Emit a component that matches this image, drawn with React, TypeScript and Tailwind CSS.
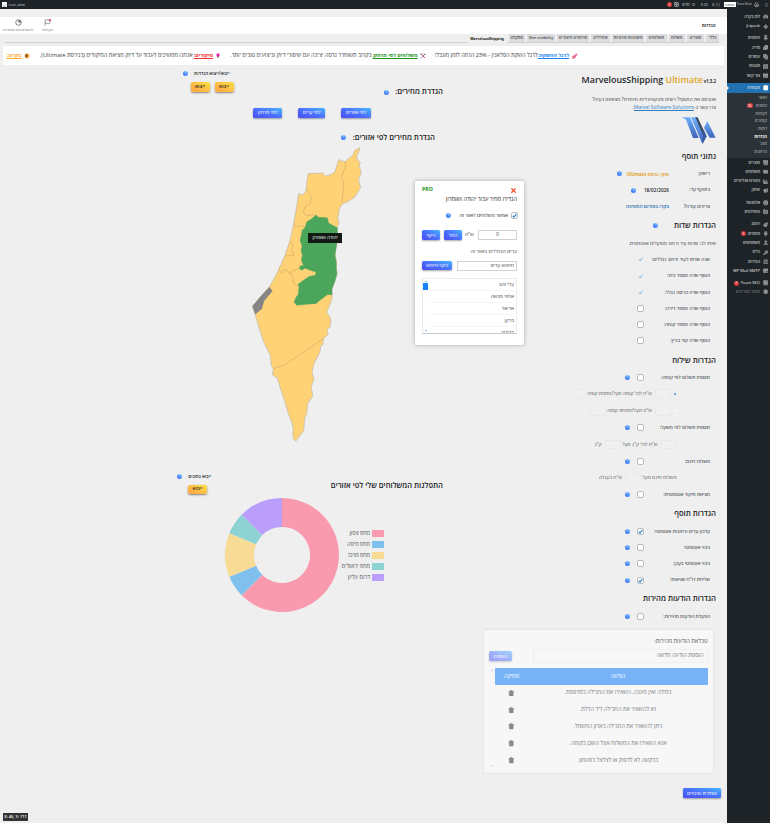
import React from "react";
import {
  Trash2, Settings, Pin, Images, Copy, MessageSquare, Mail, ShoppingBag, Archive, Banknote, BarChart3,
  Megaphone, CircleDot, Folder, Paintbrush, Plug, User, Wrench, SlidersHorizontal, MailCheck, SquareActivity,
  Gauge, Zap, Home, Flag, History, X,
} from "lucide-react";

function Help({ className = "" }: { className?: string }) {
  return (
    <span className={`flex h-[5px] w-[5px] shrink-0 items-center justify-center rounded-full bg-linear-to-bl from-[#72c2ff] to-[#3b5cf5] text-[3px] font-semibold leading-none text-[#dbe8ff] ${className}`}>
      ?
    </span>
  );
}

function Check({ on = false, ghost = false }: { on?: boolean; ghost?: boolean }) {
  return (
    <span className={`flex h-[7px] w-[7px] shrink-0 items-center justify-center rounded-[2px] ${ghost ? "" : "border border-[#b9bbbe] bg-white"}`}>
      {(on || ghost) && (
        <svg viewBox="0 0 10 10" className="h-[5px] w-[5px] shrink-0">
          <path d="M1.5 5.5 4 8 8.8 1.6" fill="none" stroke={ghost ? "#74aedb" : "#2f86c6"} strokeWidth={ghost ? 1.8 : 2.4} />
        </svg>
      )}
    </span>
  );
}

function Btn({ children, className = "text-[5px]" }: { children: React.ReactNode; className?: string }) {
  return (
    <span className={`flex shrink-0 items-center justify-center whitespace-nowrap rounded-[1.5px] bg-linear-to-bl from-[#45b5ff] via-[#4b70ff] to-[#4a4df0] font-medium leading-none text-white shadow-[0_1px_2px_rgba(0,0,0,0.35)] ${className}`}>
      {children}
    </span>
  );
}

function GoldBtn({ children }: { children: React.ReactNode }) {
  return (
    <span className="flex h-[9.5px] w-[19px] shrink-0 items-center justify-center whitespace-nowrap rounded-[2px] bg-linear-to-bl from-[#f8e043] to-[#ff9f45] pb-[1px] text-[5px] font-semibold leading-none text-[#3a3020] shadow-[0_1px_2px_rgba(0,0,0,0.45)]">
      {children}
    </span>
  );
}

function H({ children, className = "" }: { children: React.ReactNode; className?: string }) {
  return <h2 className={`flex shrink-0 items-center whitespace-nowrap text-[7.6px] font-semibold leading-none text-[#1d2327] ${className}`}>{children}</h2>;
}

function Row({ label, on, ghost, help, height = "h-[16.2px]" }: { label: string; on?: boolean; ghost?: boolean; help?: boolean; height?: string }) {
  return (
    <div className={`flex shrink-0 items-center pr-[6px] ${height}`}>
      <span className="w-[66.5px] whitespace-nowrap text-[4.95px] font-medium text-[#23282d]">{label}</span>
      <Check on={on} ghost={ghost} />
      {help && <Help className="mr-[7px]" />}
    </div>
  );
}

function Field({ className = "w-[16px]" }: { className?: string }) {
  return <span className={`h-[9.5px] shrink-0 rounded-[1px] border border-[#e9e9ea] bg-[#f0f0f0] ${className}`} />;
}

const sub = "flex shrink-0 items-center whitespace-nowrap text-[5px] text-[#55595d]";

type Item = { t: string; I: React.ComponentType<{ className?: string; strokeWidth?: number }>; h: string; badge?: string; dim?: boolean };
const menuTop: Item[] = [
  { t: "לוח בקרה", I: Gauge, h: "h-[9.3px]" },
  { t: "Jetpack", I: Zap, h: "h-[9.3px] mb-[2.4px]" },
  { t: "פוסטים", I: Pin, h: "h-[9.4px]" },
  { t: "מדיה", I: Images, h: "h-[9.4px]" },
  { t: "עמודים", I: Copy, h: "h-[9.4px]" },
  { t: "תגובות", I: MessageSquare, h: "h-[9.4px]" },
  { t: "צור קשר", I: Mail, h: "h-[9.4px]" },
];
const menuSub = ["ראשי", "הזמנות", "לקוחות", "קופונים", "דוחות", "הגדרות", "מצב", "הרחבות"];
const menuBottom: Item[] = [
  { t: "מוצרים", I: Archive, h: "h-[9.2px]" },
  { t: "תשלומים", I: Banknote, h: "h-[9.2px]" },
  { t: "נתונים אנליטיים", I: BarChart3, h: "h-[9.2px]" },
  { t: "שיווק", I: Megaphone, h: "h-[9.2px] mb-[3.2px]" },
  { t: "אלמנטור", I: CircleDot, h: "h-[9.2px]" },
  { t: "טמפלטים", I: Folder, h: "h-[9.2px] mb-[3.2px]" },
  { t: "עיצוב", I: Paintbrush, h: "h-[9.3px]" },
  { t: "תוספים", I: Plug, h: "h-[9.3px]", badge: "5" },
  { t: "משתמשים", I: User, h: "h-[9.3px]" },
  { t: "כלים", I: Wrench, h: "h-[9.3px]" },
  { t: "הגדרות", I: SlidersHorizontal, h: "h-[9.3px]" },
  { t: "WP Mail SMTP", I: MailCheck, h: "h-[9.3px] mb-[2.8px]" },
  { t: "Yoast SEO", I: SquareActivity, h: "h-[9.2px]", badge: "3" },
  { t: "מזעור תפריטים", I: Settings, h: "h-[9.2px]", dim: true },
];

function MenuItem({ t, I, h, badge, dim }: Item) {
  return (
    <div className={`flex shrink-0 items-center gap-[2.5px] whitespace-nowrap pr-[2px] text-[4.1px] font-medium leading-none ${dim ? "text-[#8a9096]" : "text-[#eeeff0]"} ${h}`}>
      <I className="h-[5.5px] w-[5.5px] shrink-0 fill-[#a7aaad]/60 text-[#a7aaad]" strokeWidth={3} />
      <span className="flex items-center gap-[2px]">
        {t}
        {badge && <i className="flex h-[5px] w-[5px] items-center justify-center rounded-full bg-[#d63638] text-[3.5px] not-italic text-white">{badge}</i>}
      </span>
    </div>
  );
}

function Sidebar() {
  return (
    <nav className="flex w-[43.5px] shrink-0 flex-col bg-[#1d2327] pt-[3.5px]">
      {menuTop.map((m) => <MenuItem key={m.t} {...m} />)}
      <div className="mt-[2.4px] flex h-[10px] shrink-0 items-center gap-[2.5px] bg-[#2271b1] pr-[2px] text-[4.1px] leading-none text-white">
        <ShoppingBag className="h-[5.5px] w-[5.5px] fill-white" strokeWidth={3} />
        ווקומרס
        <span className="mr-auto h-0 w-0 border-y-[2px] border-l-[2.5px] border-y-transparent border-l-[#f0f0f1]" />
      </div>
      <div className="flex h-[65.5px] shrink-0 flex-col bg-[#2c3338] pr-[3px] pt-[1.5px]">
        {menuSub.map((t) => (
          <div key={t} className={`flex h-[7.7px] shrink-0 items-center gap-[3px] text-[4px] leading-none ${t === "הגדרות" ? "font-bold text-white" : "text-[#c3c6c9]"}`}>
            {t}
            {t === "הזמנות" && <i className="flex h-[5px] w-[6px] items-center justify-center rounded-full bg-[#d63638] text-[3.4px] not-italic text-white">36</i>}
          </div>
        ))}
      </div>
      {menuBottom.map((m) => <MenuItem key={m.t} {...m} />)}
    </nav>
  );
}

function TopBar() {
  return (
    <header className="flex h-[9px] shrink-0 items-center whitespace-nowrap bg-[#1d2327] pr-[2px] text-[4px] leading-none text-[#d8dadc]">
      <span className="h-[4px] w-[3.5px] rounded-[1px] border border-[#50565b]" />
      <Home className="mr-[6px] h-[5px] w-[5px] text-[#b5b8bb]" strokeWidth={3} />
      <span className="mr-[2px] w-[15px] text-[3.1px]">Yossi Host</span>
      <span className="mr-[1px] flex h-[5.5px] w-[12px] items-center justify-center bg-white text-[3.6px] text-[#333]">בשידור</span>
      <Mail className="mr-[4px] h-[4px] w-[4px] text-[#8d9296]" />
      <span className="mr-[1px] w-[4px]">6</span>
      <span className="mr-[3px] h-[3.5px] w-[3.5px] rounded-[1px] border border-[#6d7276]" />
      <span className="mr-[1px] w-[4px]">0</span>
      <span className="mr-[4px] h-[3.5px] w-[3.5px] rounded-[1px] border border-[#6d7276]" />
      <span className="mr-[2px] w-[8px]">חדש</span>
      <SquareActivity className="mr-[3px] h-[5px] w-[5px]" strokeWidth={3} />
      <i className="mr-[1.5px] flex h-[5.2px] w-[5.2px] items-center justify-center rounded-full bg-[#d63638] text-[3.5px] not-italic text-white">2</i>
      <span className="mr-auto text-[3.6px]">שלום, root</span>
      <span className="ml-[2px] mr-[2px] flex h-[5px] w-[4.5px] items-end justify-center bg-[#f4f4f4]">
        <span className="h-[2px] w-[3px] rounded-t-full bg-[#c8cbce]" />
      </span>
    </header>
  );
}

const tabs: [string, string][] = [
  ["כללי", "w-[13px]"], ["מוצרים", "w-[17px]"], ["משלוח", "w-[16.5px]"], ["תשלומים", "w-[20.5px]"],
  ["חשבונות ופרטיות", "w-[32px]"], ["אימיילים", "w-[19px]"], ["שירותים חיצוניים", "w-[32px]"],
  ["Site visibility", "w-[28px]"], ["מתקדם", "w-[16.5px]"],
];

function Banner() {
  const key = "text-[5.2px] font-bold underline";
  return (
    <div className="mx-[3px] mt-[3.5px] flex h-[19px] shrink-0 items-center overflow-hidden whitespace-nowrap bg-white pr-[146px] text-[5.65px] leading-none text-[#3c4146]">
      <svg viewBox="0 0 12 12" className="ml-[2.5px] h-[6px] w-[6px] shrink-0">
        <path d="M11 1 7 2 3 6l3 3 4-4Z" fill="#e6537e" />
        <path d="m3 6-2 1 2 1M6 9l-1 2-1-2M3 8l-2 3 3-2" fill="#d81b4a" stroke="#d81b4a" />
        <circle cx="8" cy="4" r="1.2" fill="#fff" />
      </svg>
      <span className={`w-[31.5px] shrink-0 text-[#1a84f5] ${key}`}>לרגל ההשקה:</span>
      <span className="w-[112px] shrink-0">לרגל השקת הפלאגין - 25% הנחה לזמן מוגבל!</span>
      <svg viewBox="0 0 12 12" className="ml-[2px] h-[6px] w-[6px] shrink-0">
        <path d="m1 1 9 9M8 1l3 3" stroke="#d04a60" strokeWidth="2" />
        <path d="M10 2 2 11M1 4l3-3" stroke="#5d6a8a" strokeWidth="1.5" />
      </svg>
      <span className={`w-[46px] shrink-0 text-[#1f931f] ${key}`}>משלוחים לפי מרחק:</span>
      <span className="w-[150.5px] shrink-0">בקרוב תשוחרר גרסה יציבה עם שיפורי דיוק וביצועים טובים יותר.</span>
      <svg viewBox="0 0 12 12" className="ml-[2px] h-[6px] w-[6px] shrink-0">
        <path d="M6 11 3.5 6h5Z" fill="#888" />
        <circle cx="6" cy="4" r="3.3" fill="#f21ba5" />
      </svg>
      <span className={`w-[20.5px] shrink-0 text-[#f52d2d] ${key}`}>מיקודים:</span>
      <span className="w-[163px] shrink-0">אנחנו ממשיכים לעבוד על דיוק מציאת המיקודים (בגירסת Ultimate).</span>
      <svg viewBox="0 0 12 12" className="ml-[2px] h-[6px] w-[6px] shrink-0">
        <circle cx="6" cy="6" r="4.8" fill="#f0a33b" />
        <path d="M6 1a5 5 0 0 0-1 9l2-4Z" fill="#8e4b22" />
      </svg>
      <span className={`shrink-0 text-[#ffa51f] ${key}`}>בקרוב:</span>
    </div>
  );
}

function Country() {
  return (
    <svg viewBox="36 20 330 886" className="h-[295.3px] w-[110px] shrink-0" strokeLinejoin="round">
      <path
        fill="#ffd275" stroke="#c9bfa8" strokeWidth="2.5"
        d="M360 22 356 36 350 48 353 60 361 66 357 78 362 90 363 102 356 112 358 128 362 142 352 158 342 172 322 185 308 190 298 204 297 218 293 232 297 246 292 262 292 300 288 325 285 345 289 365 289 385 291 400 284 425 276 445 276 475 268 497 260 516 268 527 273 541 270 560 262 568 264 583 250 595 249 611 242 617 240 635 232 650 222 670 216 697 222 717 214 738 218 767 203 789 200 821 194 833 191 873 183 881 175 892 167 903 160 895 158 880 160 865 155 845 145 820 135 785 120 740 112 713 97 703 100 687 94 675 91 645 72 607 58 565 45 521 37 498 65 465 88 440 105 410 120 380 135 345 150 300 160 255 170 200 176 160 185 163 193 160 198 150 200 130 204 100 248 98 255 107 270 104 285 95 290 78 297 57 303 62 316 64 325 55 338 45 345 30Z"
      />
      <path
        fill="none" stroke="#d8b46c" strokeWidth="2.5"
        d="M316 64 316 80 308 100 304 112 310 125 310 150 305 190M200 145 214 170 210 190 195 200 190 215 200 227 215 224 228 224M160 256 190 258 195 262M150 305 160 312 155 328 162 345 136 347M120 378 117 388 126 398 132 388 142 392 150 398 160 390 178 385M150 396 158 410 162 430 174 438M100 685 135 673 250 595"
      />
      <path
        fill="#4ba65c" stroke="#55a35e" strokeWidth="1"
        d="M228 224 236 231 262 232 266 248 280 256 292 262 292 300 288 325 285 345 289 365 289 385 291 400 284 425 276 445 276 463 262 463 240 480 228 490 200 492 170 495 162 485 168 471 174 463 177 440 174 432 190 420 208 408 226 405 228 395 210 390 195 384 185 390 178 385 180 377 190 375 184 360 187 345 183 330 186 318 180 300 184 285 186 270 195 262 200 245 215 235Z"
      />
      <path fill="#858585" d="M88 440 98 452 92 459 72 483 66 505 46 522 37 498 65 465Z" />
    </svg>
  );
}

const slices = [
  { name: "מחוז צפון", color: "#fa9aae", from: 0, to: 225 },
  { name: "מחוז חיפה", color: "#80c0ec", from: 225, to: 247.5 },
  { name: "מחוז מרכז", color: "#f8dc96", from: 247.5, to: 292.5 },
  { name: "מחוז ירושלים", color: "#8dd3d3", from: 292.5, to: 315 },
  { name: "דרום עליון", color: "#bb9efb", from: 315, to: 360 },
];

function slicePath(from: number, to: number) {
  const p = (r: number, a: number) => {
    const t = (a * Math.PI) / 180;
    return `${57 + r * Math.sin(t)} ${57 - r * Math.cos(t)}`;
  };
  const big = to - from > 180 ? 1 : 0;
  return `M${p(57, from)}A57 57 0 ${big} 1 ${p(57, to)}L${p(28, to)}A28 28 0 ${big} 0 ${p(28, from)}Z`;
}

function PricePopup() {
  return (
    <div className="absolute left-[415px] top-[115.5px] z-10 flex h-[164px] w-[109px] flex-col rounded-[2px] bg-white px-[7px] text-[5.1px] leading-none text-[#3f4347] shadow-[0_0_4px_rgba(0,0,0,0.3)]">
      <div className="flex h-[14px] shrink-0 items-end justify-between">
        <X className="mb-[1px] h-[7px] w-[7px] text-[#f2552c]" strokeWidth={4.5} />
        <b className="pb-[2px] text-[5.2px] text-[#159015]">PRO</b>
      </div>
      <div className="flex h-[10.5px] shrink-0 items-center whitespace-nowrap text-[5.7px] font-medium text-[#1d2327]">הגדירו מחיר עבור יהודה ושומרון</div>
      <div className="-mr-[1px] flex h-[21px] shrink-0 items-center gap-[3px] whitespace-nowrap font-medium text-[#1d2327]">
        <Check on />
        <span className="w-[54px] text-[5px]">אפשר משלוחים לאזור זה</span>
        <Help />
      </div>
      <div className="flex h-[18px] shrink-0 items-center">
        <span className="flex h-[10px] w-[40px] items-center justify-center border border-[#d0d2d4]">0</span>
        <span className="mr-[4px] w-[12px]">ש"ח</span>
        <Btn className="h-[9.5px] w-[18px] text-[5px]">החל</Btn>
        <Btn className="mr-[4px] h-[9.5px] w-[18px] text-[5px]">ניקוי</Btn>
      </div>
      <div className="flex h-[15.5px] shrink-0 items-center">ערים הנכללים באזור זה</div>
      <div className="flex h-[12px] shrink-0 items-center justify-between">
        <span className="flex h-[10px] w-[60px] items-center border border-[#d0d2d4] pr-[2px]">חיפוש ערים</span>
        <Btn className="h-[9.5px] w-[30px] text-[4.9px]">ניקוי חיפוש</Btn>
      </div>
      <div className="mt-[6px] flex h-[56px] shrink-0 overflow-hidden rounded-[1px] border border-[#ececed] border-b-[#c9c9c9]">
        <div className="flex grow flex-col pr-[2px]">
          {["עלי זהב", "אלפי מנשה", "אריאל", "ברקן", "בדולח"].map((c) => (
            <div key={c} className="flex h-[12.2px] shrink-0 items-center border-b border-[#f6f6f6]">{c}</div>
          ))}
        </div>
        <div className="flex w-[5px] shrink-0 flex-col items-center py-[2px]">
          <span className="h-0 w-0 border-x-[1.2px] border-b-[1.5px] border-x-transparent border-b-[#1583ff]" />
          <span className="mt-[1.5px] h-[7px] w-[5px] bg-[#1583ff]" />
          <span className="mt-auto h-0 w-0 border-x-[1.2px] border-t-[1.5px] border-x-transparent border-t-[#1583ff]" />
        </div>
      </div>
    </div>
  );
}

function ImportBox({ label, names, className, labelShift, buttonShift }: { label: string; names: string[]; className: string; labelShift: string; buttonShift: string }) {
  return (
    <div className={`flex shrink-0 flex-col ${className}`}>
      <div className={`flex h-[8px] items-center whitespace-nowrap text-[4.6px] font-semibold leading-none text-[#23282d] ${labelShift}`}>
        {label}
        <Help className="mr-[6.5px]" />
      </div>
      <div className={`mt-[4.5px] flex gap-[5px] ${buttonShift}`}>
        {names.map((n) => <GoldBtn key={n}>{n}</GoldBtn>)}
      </div>
    </div>
  );
}

function Center() {
  return (
    <section className="relative flex grow flex-col">
      <div className="flex h-[400px] shrink-0">
        <div className="flex w-[244.5px] shrink-0 flex-col pr-[41px]">
          <H className="mt-[21px] h-[12px]">הגדרת מחירים:<Help className="mr-[6.5px]" /></H>
          <div className="mr-[72px] mt-[9.5px] flex">
            <Btn className="h-[10px] w-[30px] text-[5px]">לפי אזורים</Btn>
            <Btn className="mr-[16px] h-[10px] w-[27px] text-[5px]">לפי ערים</Btn>
            <Btn className="mr-[16px] h-[10px] w-[29px] text-[5px]">לפי מרחק</Btn>
          </div>
          <H className="mr-[8px] mt-[14px] h-[12px]">הגדרת מחירים לפי אזורים:<Help className="mr-[7px]" /></H>
          <div className="mr-[81px] mt-[3px] flex">
            <Country />
          </div>
        </div>
        <ImportBox className="mt-[4.5px] w-[60px] pr-[6px]" labelShift="mr-[4px]" buttonShift="" label="ייבוא/ייצוא הגדרות" names={["ייבוא", "ייצוא"]} />
      </div>
      <div className="flex shrink-0">
        <div className="flex w-[260px] shrink-0 flex-col pr-[41px]">
          <H className="mt-[14.5px] h-[12px]">התפלגות המשלוחים שלי לפי אזורים</H>
          <div className="mr-[59px] mt-[6.5px] flex items-center">
            <div className="flex w-[45px] shrink-0 flex-col pt-[1px]">
              {slices.map((s) => (
                <div key={s.name} className="flex h-[11px] items-center gap-[2px] whitespace-nowrap text-[5.6px] leading-none text-[#4f5256]">
                  <span className="h-[6.3px] w-[12px] shrink-0" style={{ backgroundColor: s.color }} />
                  {s.name}
                </div>
              ))}
            </div>
            <svg viewBox="0 0 114 114" className="h-[114px] w-[114px] shrink-0">
              {slices.map((s) => <path key={s.name} d={slicePath(s.from, s.to)} fill={s.color} />)}
            </svg>
          </div>
        </div>
        <ImportBox className="mt-[7px] w-[50px] pr-[13px]" labelShift="" buttonShift="mr-[4px]" label="ייבוא נתונים" names={["ייבוא"]} />
      </div>
      <PricePopup />
      <div className="absolute left-[308px] top-[167.5px] flex h-[10px] w-[34px] items-center justify-center whitespace-nowrap bg-[#111b14] text-[4.7px] leading-none text-white">
        יהודה ושומרון
      </div>
    </section>
  );
}

const messages = [
  "במידה ואין מענה, השאירו את החבילה במרפסת.",
  "נא להשאיר את החבילה ליד הדלת.",
  "ניתן להשאיר את החבילה בארון החשמל.",
  "אנא השאירו את המשלוח אצל השכן בקומה.",
  "בבקשה לא לדפוק או לצלצל בפעמון.",
];

function QuickMessages() {
  return (
    <div className="ml-[1px] mr-[3.5px] mt-[5.5px] flex h-[143px] w-[228.5px] shrink-0 flex-col rounded-[2px] bg-[#f7f7f7] px-[5px] text-[5.65px] leading-none text-[#787b7e] shadow-[0_0_2px_rgba(0,0,0,0.14)]">
      <div className="mt-[7.5px] flex h-[8px] shrink-0 items-center text-[5.7px] text-[#55585b]">טבלאת הודעות מהירות:</div>
      <div className="mt-[3px] flex h-[15px] shrink-0 items-center justify-between">
        <span className="flex h-[14.5px] w-[175px] items-center border border-[#efefef] pr-[3px]">הוספת הודעה חדשה</span>
        <Btn className="h-[10px] w-[22.5px] text-[5px] opacity-50">הוספה</Btn>
      </div>
      <div className="mt-[4.5px] flex h-[100px] shrink-0">
        <div className="flex w-[213px] shrink-0 flex-col">
          <div className="flex h-[16.3px] shrink-0 items-center rounded-[1px] bg-[#78b3f8] font-medium text-white">
            <span className="w-[179px] text-center">הודעה</span>
            <span className="w-[34px] text-center">מחיקה</span>
          </div>
          {messages.map((m) => (
            <div key={m} className="flex h-[16.85px] shrink-0 items-center">
              <span className="w-[179px] whitespace-nowrap text-center">{m}</span>
              <span className="flex w-[34px] justify-center">
                <Trash2 className="h-[6.5px] w-[6.5px] fill-[#8a8a8a] text-[#8a8a8a]" strokeWidth={2.5} />
              </span>
            </div>
          ))}
        </div>
        <div className="flex grow flex-col items-center justify-between py-[2px]">
          <span className="h-0 w-0 border-x-[1.2px] border-b-[1.5px] border-x-transparent border-b-[#78b3f8]" />
          <span className="h-0 w-0 border-x-[1.2px] border-t-[1.5px] border-x-transparent border-t-[#78b3f8]" />
        </div>
      </div>
    </div>
  );
}

function SettingsColumn() {
  const info = "flex h-[16.2px] shrink-0 items-center whitespace-nowrap pr-[6px] text-[4.95px] font-medium text-[#23282d]";
  return (
    <section className="flex w-[242.5px] shrink-0 flex-col pr-[10.5px]">
      <h1 dir="ltr" className="mt-[5px] flex h-[20px] shrink-0 items-center justify-end whitespace-nowrap text-[8.85px] font-semibold leading-none text-[#23282d]">
        MarvelousShipping&nbsp;<span className="text-[#e0a526]">Ultimate</span>
        <small className="pl-[1px] pt-[2px] text-[4.3px] font-bold">v1.3.2</small>
      </h1>
      <div className="mt-[4.5px] flex h-[17px] shrink-0 flex-col whitespace-nowrap text-[4.95px] leading-[8.5px] text-[#3c4146]">
        <span>אהבתם את התוסף? רוצים פונקציונליות מיוחדת? מצאתם בעיה?</span>
        <span>צרו קשר ב-<span className="text-[#2f7fc0] underline">Marvel Software Solutions</span>.</span>
      </div>
      <svg viewBox="0 0 102 82" className="mt-[5px] h-[27.3px] w-[34px] shrink-0">
        <defs>
          <linearGradient id="mk" x1="0" y1="0" x2="0" y2="1">
            <stop offset="0" stopColor="#6fb0ff" />
            <stop offset="1" stopColor="#3d63b8" />
          </linearGradient>
        </defs>
        <path d="M0 1h24l26 62H33L12 8Z" fill="url(#mk)" />
        <path d="M27 1h18l27 55-11 24Z" fill="url(#mk)" />
        <path d="M40 1h7l22 48-4 10Z" fill="#3f4a63" />
        <path d="M76 12 101 62H83L66 32Z" fill="url(#mk)" />
        <path d="m64 36 10 22-12 23Z" fill="#35589f" />
      </svg>
      <H className="mt-[6.5px] h-[12px]">נתוני תוסף</H>
      <div className={`mt-[3.5px] ${info}`}>
        <span className="w-[41px]">רישיון:</span>
        <span className="w-[41px] text-[4.5px] font-bold text-[#e3a42a]">חוקי, גרסת Ultimate</span>
        <Help className="mr-[6.5px]" />
      </div>
      <div className={info}>
        <span className="w-[41px]">בתוקף עד:</span>
        <span className="w-[26px] text-right text-[4.7px] font-semibold" dir="ltr">18/02/2026</span>
        <Help className="mr-[7px]" />
      </div>
      <div className={info}>
        <span className="w-[41px]">צריכים עזרה?</span>
        <span className="font-semibold text-[#2271b1]">בקרו בפורום התמיכה</span>
      </div>
      <H className="mt-[5px] h-[12px]">הגדרות שדות<Help className="mr-[15.5px]" /></H>
      <div className="mt-[5px] flex h-[15.5px] shrink-0 items-center whitespace-nowrap text-[4.95px] text-[#3c4146]">שימו לב: שדות עיר ורחוב מופעלים אוטומטית.</div>
      <Row label="שנה שדות לעיר ורחוב נגללים:" ghost />
      <Row label="הוסף שדה מספר בית:" ghost />
      <Row label="הוסף שדה כניסה נגלל:" ghost />
      <Row label="הוסף שדה מספר דירה:" />
      <Row label="הוסף שדה מספר קומה:" />
      <Row label="הוסף שדה קוד בניין:" />
      <H className="mt-[5.5px] h-[12px]">הגדרות שילוח</H>
      <Row height="mt-[3.5px] h-[16px]" label="תוספת תשלום לפי קומה:" help />
      <div className={`h-[16.5px] pr-[40px] ${sub}`}>
        <span className="ml-[3px] h-[2px] w-[2px] rounded-full bg-[#3b8ee0]" />
        <Field /><span className="mx-[3px] w-[63px]">ש"ח לכל קומה מעל/מתחת קומה</span><Field />
      </div>
      <div className={`h-[17px] pr-[40px] ${sub}`}>
        <span className="ml-[3px] h-[2px] w-[2px] rounded-full bg-white" />
        <Field /><span className="mx-[3px] w-[43.5px]">ש"ח מעל/מתחת קומה</span><Field />
      </div>
      <Row height="h-[17px]" label="תוספת תשלום לפי משקל:" help />
      <div className={`h-[16.5px] pr-[39.5px] ${sub}`}>
        <Field /><span className="mx-[3px] w-[34px]">ש"ח לכל ק"ג מעל</span><Field /><span className="mr-[3px]">ק"ג</span>
      </div>
      <Row height="h-[16.5px]" label="משלוח חינם:" help />
      <div className={`h-[16.5px] pr-[39.5px] ${sub}`}>
        <span className="w-[32.5px]">משלוח חינם מעל</span><Field className="mx-[3px] w-[16px]" /><span>ש"ח בעגלה</span>
      </div>
      <Row height="h-[17px]" label="מציאת מיקוד אוטומטית:" help />
      <H className="mt-[5px] h-[12px]">הגדרות תוסף</H>
      <Row height="mt-[3.5px] h-[16.2px]" label="עדכון ערים ורחובות אוטומטי:" on help />
      <Row label="גיבוי אוטומטי:" help />
      <Row label="גיבוי אוטומטי בענן:" help />
      <Row label={'שליחת דו"ח שגיאות:'} on help />
      <H className="mt-[5px] h-[12px]">הגדרות הודעות מהירות</H>
      <Row height="mt-[3.5px] h-[16px]" label="הפעלת הודעות מהירות:" help />
      <QuickMessages />
      <Btn className="-mr-[5px] mt-[15px] h-[10px] w-[38px] text-[5.3px]">שמירת שינויים</Btn>
    </section>
  );
}

export default function App() {
  return (
    <div dir="rtl" className="relative flex h-[823px] w-[770px] flex-col overflow-hidden bg-[#efefef] font-['Open_Sans','DejaVu_Sans',sans-serif]">
      <TopBar />
      <div className="flex min-h-0 grow">
        <Sidebar />
        <main className="flex min-w-0 grow flex-col">
          <div className="mt-[8px] flex h-[17px] shrink-0 items-center justify-between bg-white pl-[3px] pr-[11px] leading-none">
            <b className="text-[4.3px] text-[#23282d]">הגדרות</b>
            <div className="flex gap-[9px] whitespace-nowrap text-[3.7px] text-[#66696d]">
              <span className="flex flex-col items-center gap-[2px]">
                <span className="relative">
                  <Flag className="h-[7px] w-[7px] text-[#4b4f53]" />
                  <i className="absolute right-0 top-0 h-[2px] w-[2px] rounded-full bg-[#e0354a]" />
                </span>
                פעילות
              </span>
              <span className="flex flex-col items-center gap-[2px]">
                <svg viewBox="0 0 24 24" className="h-[7px] w-[7px]">
                  <circle cx="12" cy="12" r="9.5" fill="none" stroke="#4b4f53" strokeWidth="2.4" />
                  <path d="M12 12V4a8 8 0 0 1 8 8Z" fill="#4b4f53" />
                </svg>
                להשלים את ההגדרה
              </span>
            </div>
          </div>
          <div className="ml-[5px] mr-[7.5px] flex h-[8.5px] shrink-0 items-stretch gap-[2px] border-b border-[#cfd1d3] text-[4.1px] font-semibold leading-none text-[#44484c]">
            {tabs.map(([t, w]) => (
              <span key={t} className={`flex shrink-0 items-center justify-center whitespace-nowrap bg-[#dcdcde] ${w}`}>{t}</span>
            ))}
            <span className="-mb-px flex w-[39px] items-center justify-center bg-[#efefef] text-[3.5px] font-bold text-[#111]">MarvelousShipping</span>
          </div>
          <Banner />
          <div className="flex min-h-0 grow">
            <SettingsColumn />
            <Center />
          </div>
        </main>
      </div>
      <div dir="ltr" className="absolute left-[3px] top-[813px] flex h-[7.5px] w-[25px] items-center justify-center whitespace-nowrap bg-[#333] text-[4px] font-semibold leading-none text-white">
        X: 46, Y: 711
      </div>
    </div>
  );
}
